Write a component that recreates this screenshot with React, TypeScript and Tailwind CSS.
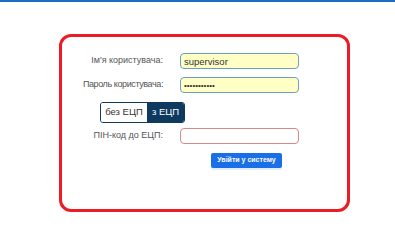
import React from 'react';

const font = { fontFamily: '"Liberation Sans", Arial, sans-serif' };

export default function App() {
  return (
    <div className="w-[395px] h-[249px] bg-white border-t-2 border-[#1c6fc0] overflow-hidden" style={font}>
      <div className="ml-[59px] mt-[32px] w-[291px] h-[178px] border-[3px] border-[#ec1c24] rounded-[12px] flex flex-col pt-[16px]">
        {/* username */}
        <div className="flex items-center h-[16px]">
          <label className="w-[101px] text-right text-[9px] text-[#555]">Ім'я користувача:</label>
          <input
            readOnly
            value="supervisor"
            className="ml-[17px] w-[119px] h-[16px] px-[3px] rounded-[4px] border border-[#6a9fc9] bg-[#ffffc6] text-[9.5px] text-[#333] outline-none"
          />
        </div>
        {/* password */}
        <div className="flex items-center h-[16px] mt-[8px]">
          <label className="w-[101px] text-right text-[9px] tracking-[-0.4px] text-[#555]">Пароль користувача:</label>
          <input
            readOnly
            type="password"
            value="supervisor1"
            className="ml-[17px] w-[119px] h-[16px] px-[3px] rounded-[4px] border border-[#6a9fc9] bg-[#ffffc6] text-[8px] text-[#333] outline-none"
          />
        </div>
        {/* mode toggle */}
        <div className="ml-[38px] mt-[9px] flex h-[21px] w-[85px] rounded-[3px] border border-[#0d3a5e] overflow-hidden text-[9.5px]">
          <button className="w-[46px] bg-white text-[#333]">без ЕЦП</button>
          <button className="flex-1 bg-[#0d3a5e] text-white">з ЕЦП</button>
        </div>
        {/* pin */}
        <div className="flex items-center h-[16px] mt-[5px]">
          <label className="w-[101px] text-right text-[9px] text-[#555]">ПІН-код до ЕЦП:</label>
          <input
            readOnly
            className="ml-[17px] w-[119px] h-[16px] px-[3px] rounded-[4px] border border-[#d48a8a] bg-white text-[10px] outline-none"
          />
        </div>
        <div className="flex ml-[149px] mt-[9px]">
          <button className="w-[71px] h-[15px] rounded-[2px] bg-[#1a6ee6] text-white text-[7px] font-bold shadow-[0_2px_0_#e2edfc]">
            Увійти у систему
          </button>
        </div>
      </div>
    </div>
  );
}
